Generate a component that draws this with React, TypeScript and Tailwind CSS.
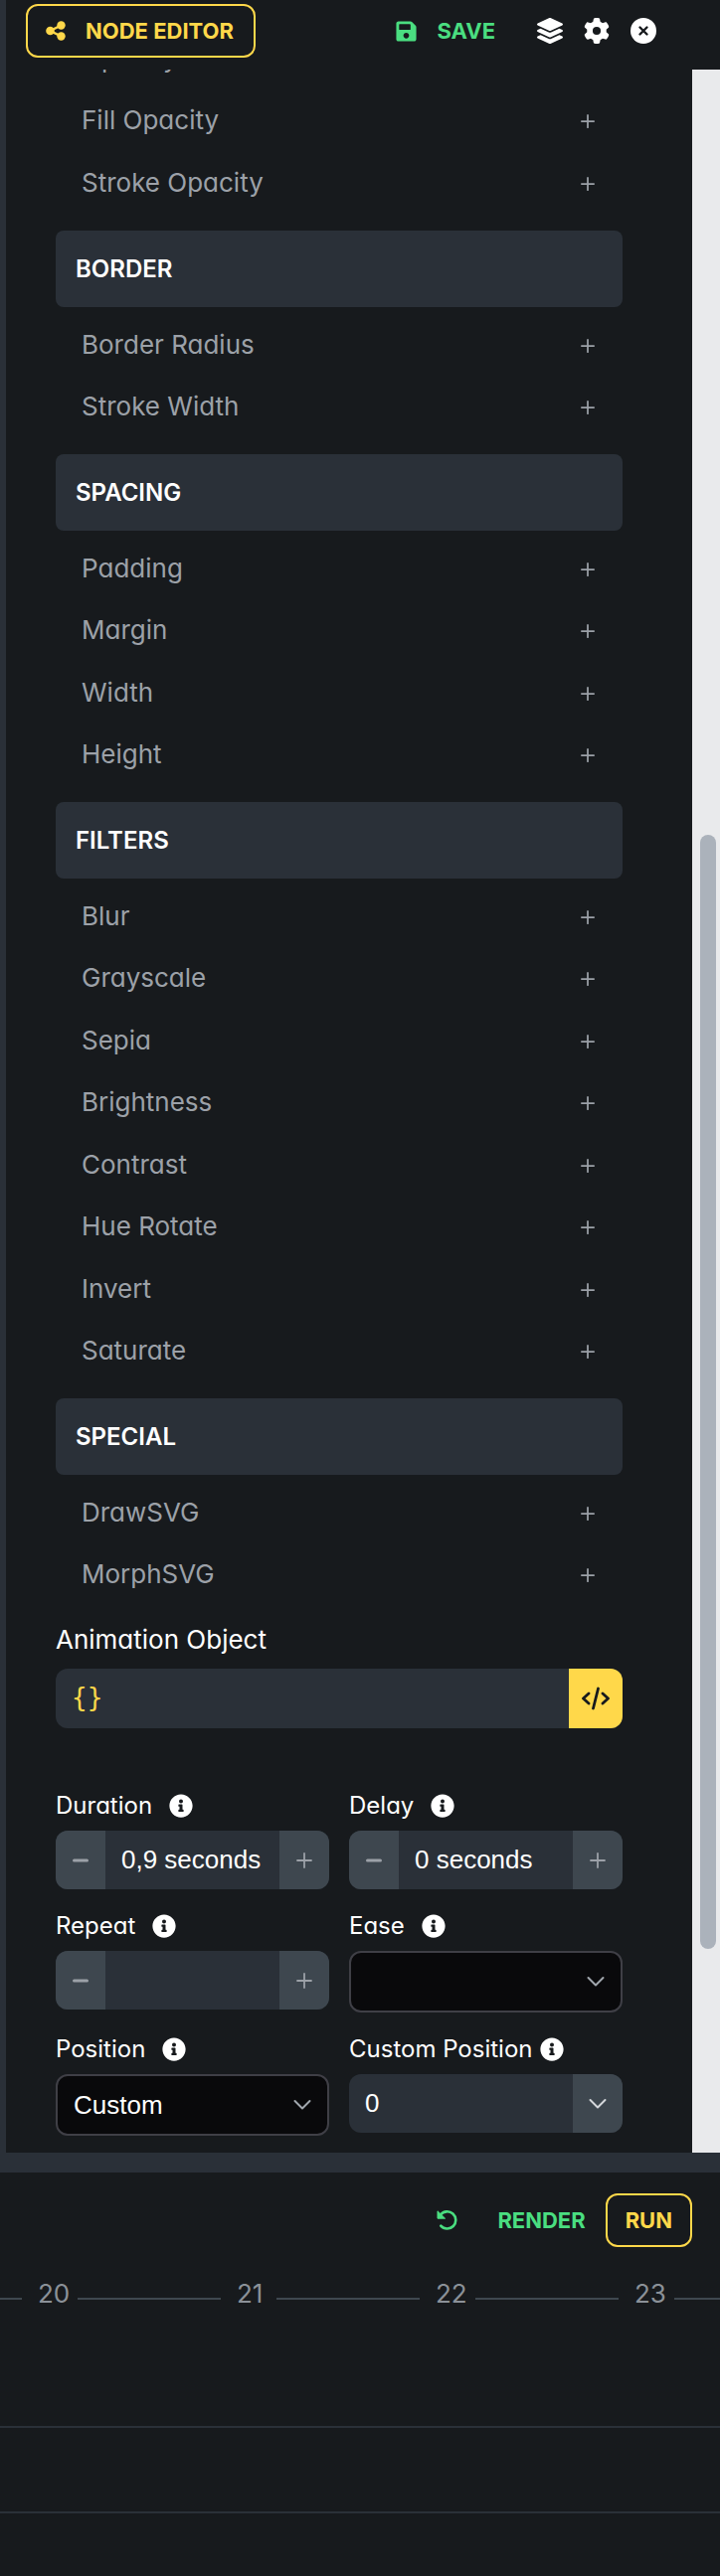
import clsx from "clsx";
import { FaSave, FaLayerGroup, FaInfoCircle } from "react-icons/fa";
import { FaGear } from "react-icons/fa6";

const topGroup = ["Opacity", "Fill Opacity", "Stroke Opacity"];

const groups = [
  { title: "BORDER", items: ["Border Radius", "Stroke Width"] },
  { title: "SPACING", items: ["Padding", "Margin", "Width", "Height"] },
  {
    title: "FILTERS",
    items: ["Blur", "Grayscale", "Sepia", "Brightness", "Contrast", "Hue Rotate", "Invert", "Saturate"],
  },
  { title: "SPECIAL", items: ["DrawSVG", "MorphSVG"] },
];

const ticks = [20, 21, 22, 23];

const ShareIcon = () => (
  <svg width="20" height="20" viewBox="0 0 20 20" fill="currentColor">
    <path d="M15.500 4.500 4.500 10l11 5.500" fill="none" stroke="currentColor" strokeWidth="2.500" />
    <circle cx="4.500" cy="10" r="4.300" />
    <circle cx="15.500" cy="4.500" r="4.200" />
    <circle cx="15.500" cy="15.500" r="4.200" />
  </svg>
);

const ResetIcon = () => (
  <svg width="21" height="20" viewBox="0 0 21 20">
    <path d="M4.300 15.700A8.600 8.600 0 1 0 4 4.500" fill="none" stroke="currentColor" strokeWidth="2.600" strokeLinecap="round" />
    <path d="M1 .8v7.400h7.600z" fill="currentColor" stroke="currentColor" strokeWidth="1" strokeLinejoin="round" />
  </svg>
);

const PlusIcon = ({ size, width }: { size: number; width: number }) => (
  <svg width={size} height={size} viewBox="0 0 16 16" stroke="currentColor" strokeWidth={width} strokeLinecap="round">
    <path d="M8 1v14M1 8h14" />
  </svg>
);

const MinusIcon = () => (
  <svg width="16" height="16" viewBox="0 0 16 16" stroke="currentColor" strokeWidth="3" strokeLinecap="round">
    <path d="M1.5 8h13" />
  </svg>
);

const ChevronIcon = () => (
  <svg width="18" height="18" viewBox="0 0 18 18" fill="none" stroke="currentColor" strokeWidth="2" strokeLinecap="round" strokeLinejoin="round">
    <path d="M1.5 5 9 12.5 16.5 5" />
  </svg>
);

const CodeIcon = () => (
  <svg width="28" height="24" viewBox="0 0 28 24" fill="none" stroke="currentColor" strokeWidth="2.8" strokeLinecap="round" strokeLinejoin="round">
    <path d="M7 7 1.5 12 7 17M21 7l5.500 5L21 17M16.500 2l-5 20" />
  </svg>
);

const CloseIcon = () => (
  <svg width="26" height="26" viewBox="0 0 26 26">
    <circle cx="13" cy="13" r="13" fill="currentColor" />
    <path d="M9.500 9.500l7 7M16.500 9.500l-7 7" stroke="#171a1d" strokeWidth="2.400" strokeLinecap="round" />
  </svg>
);

const PropertyList = ({ items }: { items: string[] }) => (
  <ul className="pt-[7px] pb-4 pl-[26px] pr-7">
    {items.map((item) => (
      <li key={item} className="flex items-center justify-between odd:h-[63px] even:h-[62px]">
        <span className="pb-[2px] text-[26px] leading-8 text-[#9ca1a8]">{item}</span>
        <button aria-label={`Add ${item}`} className="text-[#9ca1a8]">
          <PlusIcon size={14} width={2} />
        </button>
      </li>
    ))}
  </ul>
);

const FieldLabel = ({ id, text, tight }: { id: string; text: string; tight?: boolean }) => (
  <div className={clsx("flex h-6 items-center mb-[13px]", tight ? "gap-2" : "gap-[17px]")}>
    <label htmlFor={id} className="whitespace-nowrap text-[24px] leading-6 text-white">
      {text}
    </label>
    <FaInfoCircle size={24} className="shrink-0 text-white" />
  </div>
);

const NumberField = ({ id, label, value }: { id: string; label: string; value: string }) => (
  <div>
    <FieldLabel id={id} text={label} />
    <div className="flex h-[59px] overflow-hidden rounded-xl bg-[#2a3038] text-[#9ca1a8]">
      <button aria-label={`Decrease ${label}`} className="flex w-[50px] shrink-0 items-center justify-center bg-[#3e474f]">
        <MinusIcon />
      </button>
      <input
        id={id}
        defaultValue={value}
        className="min-w-0 flex-1 px-4 font-['Liberation_Sans',sans-serif] text-[26px] text-white outline-none"
      />
      <button aria-label={`Increase ${label}`} className="flex w-[50px] shrink-0 items-center justify-center bg-[#3e474f]">
        <PlusIcon size={16} width={1.8} />
      </button>
    </div>
  </div>
);

const SelectField = ({ id, label, options }: { id: string; label: string; options: string[] }) => (
  <div>
    <FieldLabel id={id} text={label} />
    <div className="grid items-center">
      <select
        id={id}
        className="col-start-1 row-start-1 h-[62px] w-full appearance-none rounded-xl border-2 border-[#3f3f46] bg-[#09090b] px-4 font-['Liberation_Sans',sans-serif] text-[26px] text-white"
      >
        {options.map((option) => (
          <option key={option}>{option}</option>
        ))}
      </select>
      <span className="pointer-events-none col-start-1 row-start-1 mr-[18px] justify-self-end text-[#a1a7ae]">
        <ChevronIcon />
      </span>
    </div>
  </div>
);

const Header = () => (
  <header className="flex h-[70px] items-start justify-between pt-1 pl-5 pr-16">
    <button className="flex h-[54px] items-center gap-5 rounded-xl border-2 border-[#ffd84a] pl-[18px] pr-5 text-[22px] font-bold text-[#ffd84a]">
      <ShareIcon />
      NODE EDITOR
    </button>
    <div className="flex h-[54px] items-center text-white">
      <button className="mr-[42px] flex items-center gap-[19px] text-[22px] font-bold text-[#4ade80]">
        <FaSave size={23} />
        SAVE
      </button>
      <div className="flex items-center gap-[21px]">
        <button aria-label="Layers">
          <FaLayerGroup size={26} />
        </button>
        <button aria-label="Settings">
          <FaGear size={26} />
        </button>
        <button aria-label="Close">
          <CloseIcon />
        </button>
      </div>
    </div>
  </header>
);

const Properties = () => (
  <div className="min-w-0 flex-1 pl-[50px] pr-[70px] pb-[17px]">
    <div className="-mt-[49px]">
      <PropertyList items={topGroup} />
    </div>
    {groups.map((group) => (
      <section key={group.title}>
        <h2 className="flex h-[77px] items-center rounded-lg bg-[#2a3038] px-5 text-[24px] font-semibold text-white">{group.title}</h2>
        <PropertyList items={group.items} />
      </section>
    ))}

    <label htmlFor="animation-object" className="block text-[26px] leading-9 text-white">
      Animation Object
    </label>
    <div className="mt-[11px] mb-[66px] flex h-[60px] overflow-hidden rounded-xl bg-[#2a3038]">
      <input
        id="animation-object"
        defaultValue="{}"
        className="min-w-0 flex-1 px-4 pb-[2px] font-['DejaVu_Sans_Mono',monospace] text-[26px] text-[#ffd84a] outline-none"
      />
      <button aria-label="Edit code" className="flex w-[54px] shrink-0 items-center justify-center bg-[#ffd84a] text-[#171a1d]">
        <CodeIcon />
      </button>
    </div>

    <div className="grid grid-cols-2 gap-x-5 gap-y-[25px]">
      <NumberField id="duration" label="Duration" value="0,9 seconds" />
      <NumberField id="delay" label="Delay" value="0 seconds" />
      <NumberField id="repeat" label="Repeat" value="" />
      <SelectField id="ease" label="Ease" options={[""]} />
      <SelectField id="position" label="Position" options={["Custom"]} />
      <div>
        <FieldLabel id="custom-position" text="Custom Position" tight />
        <div className="flex h-[59px] overflow-hidden rounded-xl bg-[#2a3038]">
          <input
            id="custom-position"
            defaultValue="0"
            className="min-w-0 flex-1 px-4 font-['Liberation_Sans',sans-serif] text-[26px] text-white outline-none"
          />
          <button aria-label="Position presets" className="flex w-[50px] shrink-0 items-center justify-center bg-[#3e474f] text-[#d4d7db]">
            <ChevronIcon />
          </button>
        </div>
      </div>
    </div>
  </div>
);

const Timeline = () => (
  <section className="pb-[63px]">
    <div className="flex h-[96px] items-center justify-end pr-7">
      <button aria-label="Reset" className="mr-10 text-[#4ade80]">
        <ResetIcon />
      </button>
      <button className="mr-5 text-[22px] font-bold text-[#4ade80]">RENDER</button>
      <button className="h-[54px] rounded-xl border-2 border-[#ffd84a] px-[18px] text-[22px] font-bold text-[#ffd84a]">RUN</button>
    </div>
    <div className="flex h-[52px] items-center overflow-hidden">
      <div className="mt-[10px] h-[2px] w-[22px] shrink-0 bg-[#3e474f]" />
      {ticks.map((tick) => (
        <div key={tick} className="flex w-[200px] shrink-0 items-center">
          <span className="w-14 pl-4 text-[26px] leading-8 text-[#8b9198]">{tick}</span>
          <div className="mt-[10px] h-[2px] flex-1 bg-[#3e474f]" />
        </div>
      ))}
    </div>
    <div className="h-[109px] border-b-2 border-[#2a3038]" />
    <div className="h-[86px] border-b-2 border-[#2a3038]" />
  </section>
);

export default function App() {
  return (
    <div className="bg-[#171a1d] font-[Inter,sans-serif] [font-feature-settings:'cv11'_1]">
      <div className="border-b-[20px] border-[#2a3038]">
        <div className="border-l-[6px] border-[#2a3038]">
          <Header />
          <div className="flex overflow-hidden">
            <Properties />
            <div className="flex w-7 shrink-0 flex-col bg-[#e9eaec] pl-2 pr-1">
              <div className="basis-[770px]" />
              <div className="basis-[1121px] rounded-full bg-[#abb2bb]" />
            </div>
          </div>
        </div>
      </div>
      <Timeline />
    </div>
  );
}
